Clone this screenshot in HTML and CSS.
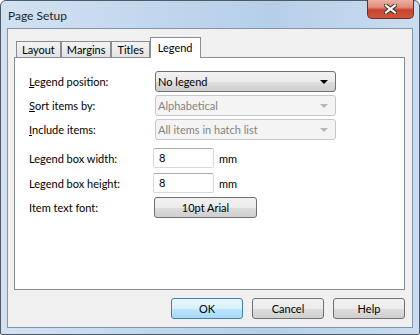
FILE: index.html
```html
<!DOCTYPE html>
<html lang="en">
<head>
    <meta charset="UTF-8">
    <title>Page Setup</title>
    <link rel="stylesheet" href="styles.css">
</head>
<body>
    <div class="window">
        <div class="titlebar">
            <span class="title">Page Setup</span>
            <div class="close">
                <svg width="13" height="10" viewBox="0 0 13 10">
                    <path d="M2 1.5 L11 8.5 M11 1.5 L2 8.5" stroke="#3b3030" stroke-width="4.2" stroke-linecap="square"/>
                    <path d="M2 1.5 L11 8.5 M11 1.5 L2 8.5" stroke="#ffffff" stroke-width="2.2" stroke-linecap="square"/>
                </svg>
            </div>
        </div>

        <div class="client">
            <!-- tab strip -->
            <div class="tabs">
                <div class="tab">Layout</div>
                <div class="tab">Margins</div>
                <div class="tab">Titles</div>
                <div class="tab active">Legend</div>
            </div>

            <div class="panel">
                <div class="row row-select">
                    <span class="label"><u>L</u>egend position:</span>
                    <div class="select">No legend<span class="arrow"></span></div>
                </div>
                <div class="row row-select">
                    <span class="label"><u>S</u>ort items by:</span>
                    <div class="select disabled">Alphabetical<span class="arrow"></span></div>
                </div>
                <div class="row row-select last-select">
                    <span class="label"><u>I</u>nclude items:</span>
                    <div class="select disabled">All items in hatch list<span class="arrow"></span></div>
                </div>
                <div class="row row-input">
                    <span class="label">Legend box width:</span>
                    <div class="input">8</div>
                    <span class="unit">mm</span>
                </div>
                <div class="row row-input">
                    <span class="label">Legend box height:</span>
                    <div class="input">8</div>
                    <span class="unit">mm</span>
                </div>
                <div class="row row-button">
                    <span class="label">Item text font:</span>
                    <button class="btn font-btn">10pt Arial</button>
                </div>
            </div>

            <div class="buttons">
                <button class="btn default">OK</button>
                <button class="btn">Cancel</button>
                <button class="btn">Help</button>
            </div>
        </div>
    </div>
</body>
</html>
```

FILE: styles.css
```css
body {
    margin: 0;
    font-family: 'Lato', 'Noto Sans', sans-serif;
    font-size: 11px;
    color: #000;
    background: #fff;
}
.window {
    width: 420px;
    height: 335px;
    box-sizing: border-box;
    border: 1px solid #4d5a68;
    border-radius: 6px 6px 2px 2px;
    padding: 0 6px 6px;
    background: linear-gradient(90deg, #d3e2f2 0%, #bdd4ec 45%, #b6cfe9 65%, #cadcef 100%);
    display: flex;
    flex-direction: column;
}
.titlebar {
    height: 27px;
    display: flex;
    align-items: flex-start;
    justify-content: space-between;
}
.title {
    margin-top: 7px;
    margin-left: 1px;
    font-size: 12px;
    color: #1e1e1e;
}
.close {
    width: 45px;
    height: 18px;
    margin-top: -1px;
    margin-right: -1px;
    border: 1px solid #6e2c23;
    border-top: none;
    border-radius: 0 0 5px 5px;
    background: linear-gradient(#eab0a2 0%, #df8c7b 40%, #c8442c 55%, #cf553c 100%);
    display: flex;
    align-items: center;
    justify-content: center;
}
.client {
    flex: 1;
    border: 1px solid #8295ab;
    background: #f0f0f0;
    padding: 8px 7px 8px 6px;
    display: flex;
    flex-direction: column;
}
.tabs {
    height: 20px;
    padding-left: 2px;
    display: flex;
    align-items: flex-end;
}
.tab {
    height: 16px;
    box-sizing: border-box;
    padding: 0 5px;
    border: 1px solid #898c95;
    border-bottom: none;
    background: linear-gradient(#f3f3f3, #e3e3e3);
    line-height: 16px;
}
.tab.active {
    height: 21px;
    margin-bottom: -1px;
    padding: 0 7px;
    background: #fff;
    position: relative;
    line-height: 19px;
}
.panel {
    height: 233px;
    box-sizing: border-box;
    border: 1px solid #898c95;
    background: #fff;
    padding: 13px 0 0 14px;
}
.row {
    display: flex;
    align-items: center;
}
.label {
    width: 124px;
}
.row-select {
    height: 21px;
    margin-bottom: 3px;
}
.row-select.last-select {
    margin-bottom: 8px;
}
.row-input {
    height: 20px;
    margin-bottom: 5px;
}
.row-button {
    height: 21px;
    margin-top: -1px;
}
.select {
    width: 181px;
    height: 21px;
    box-sizing: border-box;
    margin-left: 2px;
    padding-left: 2px;
    border: 1px solid #707070;
    border-radius: 3px;
    background: linear-gradient(#f2f2f2 0%, #ebebeb 50%, #dddddd 51%, #cfcfcf 100%);
    display: flex;
    align-items: center;
    justify-content: space-between;
}
.select.disabled {
    border-color: #c4c7ca;
    background: #f4f4f4;
    color: #838383;
}
.arrow {
    margin-right: 7px;
    border-left: 4px solid transparent;
    border-right: 4px solid transparent;
    border-top: 4px solid #000;
}
.select.disabled .arrow {
    border-top-color: #b5b5b5;
}
.input {
    width: 61px;
    height: 20px;
    box-sizing: border-box;
    border: 1px solid #d5d8dd;
    border-top-color: #abadb3;
    border-radius: 2px;
    background: #fff;
    padding-left: 5px;
    line-height: 18px;
}
.unit {
    margin-left: 5px;
}
.btn {
    height: 21px;
    box-sizing: border-box;
    border: 1px solid #707070;
    border-radius: 3px;
    background: linear-gradient(#f2f2f2 0%, #ebebeb 50%, #dddddd 51%, #cfcfcf 100%);
    font-family: inherit;
    font-size: 11px;
    color: #000;
    padding: 0;
}
.font-btn {
    width: 103px;
    margin-left: 1px;
}
.btn.default {
    border-color: #3c7fb1;
    background: linear-gradient(#eaf6fd 0%, #d9f0fc 50%, #bee6fd 51%, #a7d9f5 100%);
}
.buttons {
    margin-top: 8px;
    display: flex;
    justify-content: flex-end;
    gap: 9px;
}
.buttons .btn {
    width: 72px;
}
```
